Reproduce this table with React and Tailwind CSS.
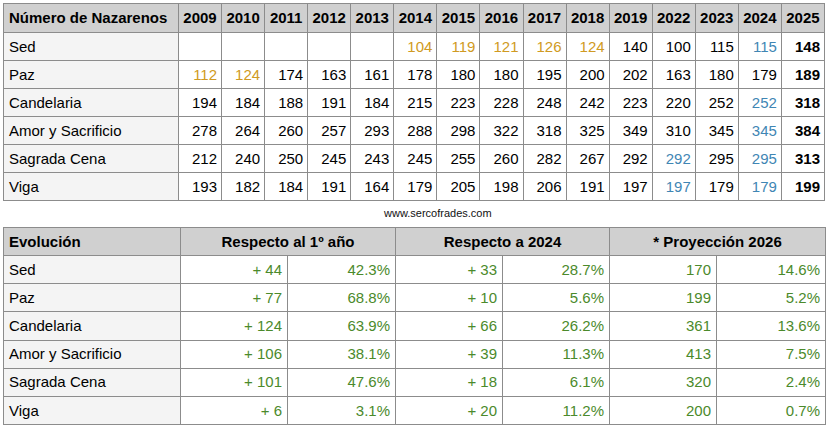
import React from 'react';

const years = ['2009', '2010', '2011', '2012', '2013', '2014', '2015', '2016', '2017', '2018', '2019', '2022', '2023', '2024', '2025'];

// o = orange (estimated), b = blue (repeated), n = normal
const rows = [
  { name: 'Sed', vals: ['', '', '', '', '', '104o', '119o', '121o', '126o', '124o', '140', '100', '115', '115b', '148'] },
  { name: 'Paz', vals: ['112o', '124o', '174', '163', '161', '178', '180', '180', '195', '200', '202', '163', '180', '179', '189'] },
  { name: 'Candelaria', vals: ['194', '184', '188', '191', '184', '215', '223', '228', '248', '242', '223', '220', '252', '252b', '318'] },
  { name: 'Amor y Sacrificio', vals: ['278', '264', '260', '257', '293', '288', '298', '322', '318', '325', '349', '310', '345', '345b', '384'] },
  { name: 'Sagrada Cena', vals: ['212', '240', '250', '245', '243', '245', '255', '260', '282', '267', '292', '292b', '295', '295b', '313'] },
  { name: 'Viga', vals: ['193', '182', '184', '191', '164', '179', '205', '198', '206', '191', '197', '197b', '179', '179b', '199'] },
];

const evolution = [
  ['Sed', '+ 44', '42.3%', '+ 33', '28.7%', '170', '14.6%'],
  ['Paz', '+ 77', '68.8%', '+ 10', '5.6%', '199', '5.2%'],
  ['Candelaria', '+ 124', '63.9%', '+ 66', '26.2%', '361', '13.6%'],
  ['Amor y Sacrificio', '+ 106', '38.1%', '+ 39', '11.3%', '413', '7.5%'],
  ['Sagrada Cena', '+ 101', '47.6%', '+ 18', '6.1%', '320', '2.4%'],
  ['Viga', '+ 6', '3.1%', '+ 20', '11.2%', '200', '0.7%'],
];

const Cell = ({ v, last }) => {
  let color = 'text-black';
  let text = v;
  if (v.endsWith('o')) {
    color = 'text-[#d09a22]';
    text = v.slice(0, -1);
  } else if (v.endsWith('b')) {
    color = 'text-[#3f86b4]';
    text = v.slice(0, -1);
  }
  return (
    <td className={`border border-[#8c8c8c] px-[4px] text-right whitespace-nowrap ${color} ${last ? 'font-bold' : ''}`}>
      {text}
    </td>
  );
};

export default function App() {
  return (
    <div className="bg-white w-[828px] h-[429px] pt-[3px] pl-[3px] text-[15px] leading-[18px] text-black" style={{ fontFamily: '"Liberation Sans", Arial, sans-serif' }}>
      <table className="table-fixed border-collapse w-[822px]">
        <colgroup>
          <col className="w-[175px]" />
          {years.map((y) => (
            <col key={y} />
          ))}
        </colgroup>
        <thead>
          <tr className="h-[29px] bg-[#d0d0d0]">
            <th className="border border-[#8c8c8c] px-[5px] text-left font-bold whitespace-nowrap">Número de Nazarenos</th>
            {years.map((y) => (
              <th key={y} className="border border-[#8c8c8c] px-[3px] text-center font-bold whitespace-nowrap">{y}</th>
            ))}
          </tr>
        </thead>
        <tbody>
          {rows.map((r) => (
            <tr key={r.name} className="h-[28px]">
              <td className="border border-[#8c8c8c] bg-[#f4f4f4] px-[5px] text-left">{r.name}</td>
              {r.vals.map((v, i) => (
                <Cell key={i} v={v} last={i === r.vals.length - 1} />
              ))}
            </tr>
          ))}
        </tbody>
      </table>

      <div className="h-[26px] pl-[381px] pt-[6px] text-[11px] leading-[13px] text-[#111]">www.sercofrades.com</div>

      <table className="table-fixed border-collapse w-[822px]">
        <colgroup>
          <col className="w-[177px]" />
          <col className="w-[107px]" />
          <col className="w-[108px]" />
          <col className="w-[107px]" />
          <col className="w-[107px]" />
          <col className="w-[107px]" />
          <col className="w-[109px]" />
        </colgroup>
        <thead>
          <tr className="h-[28px] bg-[#d0d0d0]">
            <th className="border border-[#8c8c8c] px-[5px] text-left font-bold">Evolución</th>
            <th colSpan={2} className="border border-[#8c8c8c] px-[5px] text-center font-bold">Respecto al 1º año</th>
            <th colSpan={2} className="border border-[#8c8c8c] px-[5px] text-center font-bold">Respecto a 2024</th>
            <th colSpan={2} className="border border-[#8c8c8c] px-[5px] text-center font-bold">* Proyección 2026</th>
          </tr>
        </thead>
        <tbody>
          {evolution.map((r) => (
            <tr key={r[0]} className="h-[28.2px]">
              <td className="border border-[#8c8c8c] bg-[#f4f4f4] px-[5px] text-left">{r[0]}</td>
              {r.slice(1).map((v, i) => (
                <td key={i} className="border border-[#8c8c8c] px-[5px] text-right text-[#4b8a2b]">{v}</td>
              ))}
            </tr>
          ))}
        </tbody>
      </table>
    </div>
  );
}
